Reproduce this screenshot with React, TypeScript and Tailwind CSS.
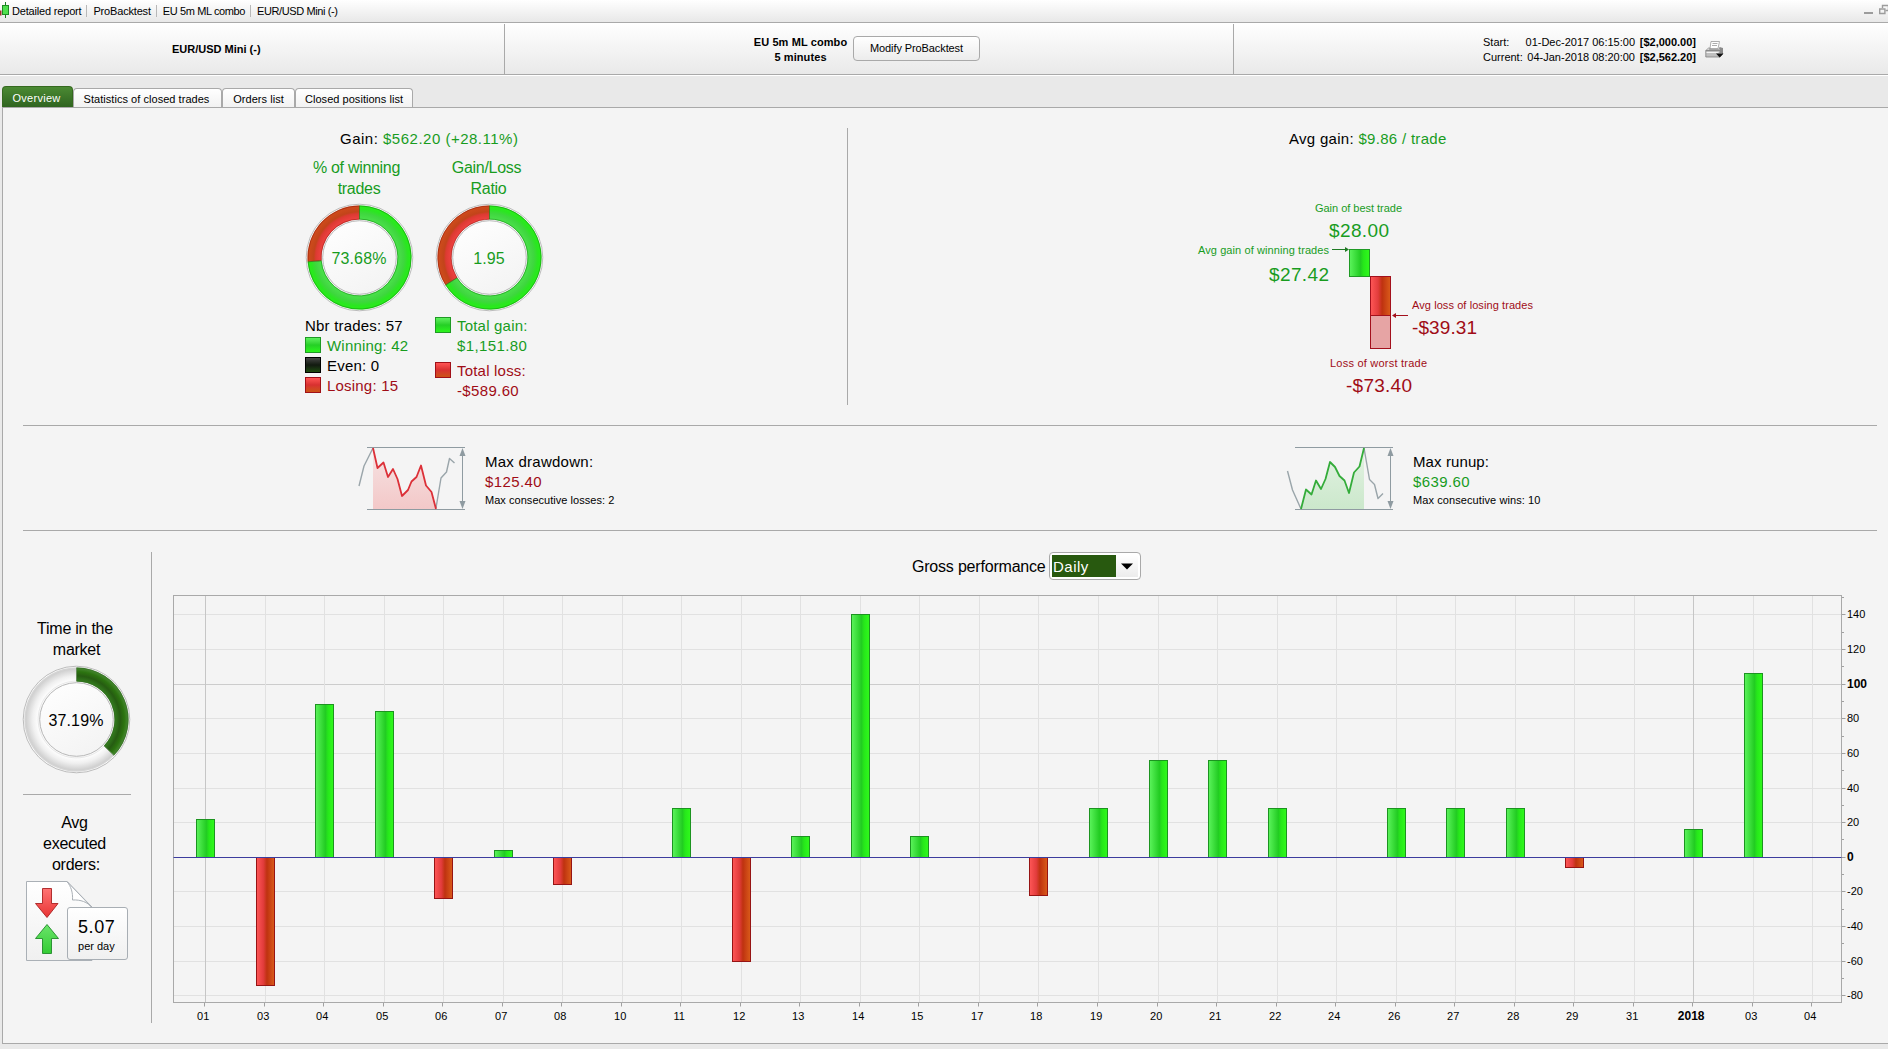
import type { ReactNode } from 'react'

const GREEN = '#189c1e'
const RED = '#a00c16'

interface DayBar {
  label: string
  value: number
  bold?: boolean
}

const days: DayBar[] = [
  { label: '01', value: 22 },
  { label: '03', value: -74 },
  { label: '04', value: 88 },
  { label: '05', value: 84 },
  { label: '06', value: -24 },
  { label: '07', value: 4 },
  { label: '08', value: -16 },
  { label: '10', value: 0 },
  { label: '11', value: 28 },
  { label: '12', value: -60 },
  { label: '13', value: 12 },
  { label: '14', value: 140 },
  { label: '15', value: 12 },
  { label: '17', value: 0 },
  { label: '18', value: -22 },
  { label: '19', value: 28 },
  { label: '20', value: 56 },
  { label: '21', value: 56 },
  { label: '22', value: 28 },
  { label: '24', value: 0 },
  { label: '26', value: 28 },
  { label: '27', value: 28 },
  { label: '28', value: 28 },
  { label: '29', value: -6 },
  { label: '31', value: 0 },
  { label: '2018', value: 16, bold: true },
  { label: '03', value: 106 },
  { label: '04', value: 0 },
]

// Gradients shared by every chart on the page
function Gradients() {
  return (
    <svg width="0" height="0" className="absolute">
      <defs>
        <linearGradient id="barGreen">
          <stop offset="0" stopColor="#5cf45c" />
          <stop offset="0.55" stopColor="#22cc22" />
          <stop offset="0.7" stopColor="#26e81a" />
          <stop offset="1" stopColor="#30fa1c" />
        </linearGradient>
        <linearGradient id="barRed">
          <stop offset="0" stopColor="#ff5757" />
          <stop offset="0.38" stopColor="#e23c3c" />
          <stop offset="0.58" stopColor="#bf3210" />
          <stop offset="1" stopColor="#da5c1a" />
        </linearGradient>
        <radialGradient id="ringGreen" gradientUnits="userSpaceOnUse" cx="54.5" cy="54.5" r="52">
          <stop offset="0.73" stopColor="#4be24b" />
          <stop offset="0.85" stopColor="#3fd63f" />
          <stop offset="0.93" stopColor="#2ae620" />
          <stop offset="1" stopColor="#26f016" />
        </radialGradient>
        <radialGradient id="ringRed" gradientUnits="userSpaceOnUse" cx="54.5" cy="54.5" r="52">
          <stop offset="0.73" stopColor="#f04242" />
          <stop offset="0.84" stopColor="#dc3a32" />
          <stop offset="0.88" stopColor="#c2441a" />
          <stop offset="1" stopColor="#d04c1c" />
        </radialGradient>
        <radialGradient id="ringDark" gradientUnits="userSpaceOnUse" cx="54.5" cy="54.5" r="52">
          <stop offset="0.73" stopColor="#357f20" />
          <stop offset="0.84" stopColor="#265c12" />
          <stop offset="0.92" stopColor="#2c7410" />
          <stop offset="1" stopColor="#4a8a36" />
        </radialGradient>
        <radialGradient id="ringGrey" gradientUnits="userSpaceOnUse" cx="54.5" cy="54.5" r="52">
          <stop offset="0.73" stopColor="#ffffff" />
          <stop offset="0.84" stopColor="#f0f0f0" />
          <stop offset="0.97" stopColor="#d0d0d0" />
          <stop offset="1" stopColor="#dadada" />
        </radialGradient>
        <linearGradient id="hole" x1="0" y1="0" x2="0.6" y2="1">
          <stop offset="0" stopColor="#ffffff" />
          <stop offset="1" stopColor="#f4f4f4" />
        </linearGradient>
        <linearGradient id="fillRed" x1="0" y1="0" x2="0" y2="1">
          <stop offset="0" stopColor="#f6e4e4" />
          <stop offset="1" stopColor="#f3c8c8" />
        </linearGradient>
        <linearGradient id="fillGreen" x1="0" y1="0" x2="0" y2="1">
          <stop offset="0" stopColor="#e4f2e4" />
          <stop offset="1" stopColor="#cbe8cb" />
        </linearGradient>
        <linearGradient id="page" x1="0" y1="0" x2="0" y2="1">
          <stop offset="0" stopColor="#ffffff" />
          <stop offset="1" stopColor="#f0f0f0" />
        </linearGradient>
        <linearGradient id="arrowRed" x1="0" y1="0" x2="0" y2="1">
          <stop offset="0" stopColor="#ff7474" />
          <stop offset="1" stopColor="#e83434" />
        </linearGradient>
        <linearGradient id="arrowGreen" x1="0" y1="0" x2="0" y2="1">
          <stop offset="0" stopColor="#6ae46a" />
          <stop offset="1" stopColor="#34cc34" />
        </linearGradient>
      </defs>
    </svg>
  )
}

function sector(from: number, to: number, outer: number, inner: number) {
  const c = 54.5
  const point = (t: number, r: number) => {
    const a = t * 2 * Math.PI
    return `${(c + r * Math.sin(a)).toFixed(2)} ${(c - r * Math.cos(a)).toFixed(2)}`
  }
  const large = to - from > 0.5 ? 1 : 0
  return `M${point(from, outer)} A${outer} ${outer} 0 ${large} 1 ${point(to, outer)} L${point(to, inner)} A${inner} ${inner} 0 ${large} 0 ${point(from, inner)} Z`
}

interface DonutProps {
  share: number
  text: string
  color: string
  fill: string
  rest: string
  edge: string
  restEdge: string
}

function Donut({ share, text, color, fill, rest, edge, restEdge }: DonutProps) {
  return (
    <svg width="109" height="109" className="block">
      <circle cx="54.5" cy="54.5" r="53.3" fill="#fafafa" stroke="#b4b4b4" strokeWidth="0.9" />
      <path d={sector(share, 1, 52, 38)} fill={rest} />
      <path d={sector(0, share, 52, 38)} fill={fill} />
      <path d={sector(share, 1, 51.6, 38.4)} fill="none" stroke={restEdge} strokeWidth="0.8" strokeOpacity="0.6" />
      <path d={sector(0, share, 51.6, 38.4)} fill="none" stroke={edge} strokeWidth="0.8" strokeOpacity="0.7" />
      <circle cx="54.5" cy="54.5" r="36.8" fill="url(#hole)" stroke="#b0b0b0" strokeWidth="0.9" />
      <text x="54" y="61" fontSize="16" textAnchor="middle" fill={color} letterSpacing="0.15">
        {text}
      </text>
    </svg>
  )
}

function Swatch({ tone }: { tone: 'green' | 'black' | 'red' }) {
  const tones = {
    green: 'border-[#1f9a24] from-[#5cf05c] via-[#25cf25] to-[#2cf41c]',
    black: 'border-black from-[#454545] via-[#121a10] to-[#1c4a0c]',
    red: 'border-[#a01018] from-[#ff5454] via-[#d83030] to-[#cc5214]',
  }
  return <span className={`mt-px size-4 shrink-0 border bg-linear-to-b ${tones[tone]}`} />
}

function LegendRow({ tone, className, children }: { tone: 'green' | 'black' | 'red'; className?: string; children: ReactNode }) {
  return (
    <div className={`flex gap-1.5 whitespace-nowrap ${className ?? ''}`}>
      <Swatch tone={tone} />
      <span>{children}</span>
    </div>
  )
}

function Crumb({ className, children }: { className: string; children: ReactNode }) {
  return (
    <span className={`flex items-center ${className}`}>
      <span className="mr-[6px] ml-[5px] h-3 w-px bg-[#b8b8b8]" />
      {children}
    </span>
  )
}

function TitleBar() {
  return (
    <div className="flex h-[23px] border-b border-[#a9a9a9] bg-linear-to-b from-white to-[#e8e8e8] text-[11px] leading-[22px]">
      <svg width="9" height="22" className="shrink-0">
        <path d="M0 10.5h1.5v5H0z" fill="#a03028" />
        <path d="M5.5 2v16" stroke="#1f7a24" />
        <rect x="2.5" y="5.5" width="6" height="9" fill="#4ee04e" stroke="#1f8a24" />
      </svg>
      <span className="ml-[3px] tracking-[-0.18px]">Detailed report</span>
      <Crumb className="tracking-[-0.18px]">ProBacktest</Crumb>
      <Crumb className="tracking-[-0.38px]">EU 5m ML combo</Crumb>
      <Crumb className="tracking-[-0.4px]">EUR/USD Mini (-)</Crumb>
      <svg width="24" height="22" className="ml-auto shrink-0" fill="none" stroke="#9c9c9c">
        <path d="M0 13h9" strokeWidth="2" />
        <path d="M18.5 8v-2.5h6v5h-3" strokeWidth="1.4" />
        <path d="M15.7 9h5.2v4.5h-5.2z" strokeWidth="1.4" />
      </svg>
    </div>
  )
}

function PrinterIcon() {
  return (
    <svg width="19" height="19">
      <path d="M6 1.5h8.5l-1.500 7h-8z" fill="#fff" stroke="#9c9c9c" strokeWidth="0.8" />
      <path d="M7.500 3.500h5M7 5.500h5" stroke="#999" strokeWidth="0.8" />
      <path d="M3.500 8h1.500l-.5 1.500h9l.8-1.500h1.200l2 2.500H.8z" fill="#d4d4d4" stroke="#8a8a8a" strokeWidth="0.7" />
      <path d="M.8 10.500h16.700v4l-3 2.500H.8z" fill="#c0c0c0" stroke="#808080" strokeWidth="0.8" />
      <path d="M1.500 12.500h12" stroke="#f4f4f4" />
      <path d="M14.500 7l3.500 1v5h-3.500z" fill="#8a8a8a" />
      <path d="M11 13.500h7.500l-3.800 4z" fill="#111" />
    </svg>
  )
}

function Header() {
  return (
    <div className="flex h-[52px] border-b border-[#a9a9a9] bg-linear-to-b from-white to-[#e9e9e9] text-[11px]">
      <div className="mt-px flex w-[505px] items-center border-r border-[#a9a9a9] pl-[172px] text-[11px] font-bold">
        EUR/USD Mini (-)
      </div>
      <div className="mt-px flex w-[729px] items-center border-r border-[#a9a9a9] pb-[2px] pl-[248px]">
        <div className="w-[95px] pt-[3px] text-center leading-[15px] font-bold tracking-[0.1px] whitespace-nowrap">
          EU 5m ML combo
          <br />5 minutes
        </div>
        <button className="ml-[5px] h-[25px] w-[127px] rounded border border-[#a9a9a9] bg-linear-to-b from-white to-[#ececec] pt-px text-[11px] tracking-[-0.1px]">
          Modify ProBacktest
        </button>
      </div>
      <div className="flex items-center pb-[1px] pl-[249px]">
        <div className="grid grid-cols-[38px_114px_61px] pt-[3px] leading-[15px] whitespace-nowrap">
          <span>Start:</span>
          <span className="text-right">01-Dec-2017 06:15:00</span>
          <b className="text-right">[$2,000.00]</b>
          <span>Current:</span>
          <span className="text-right">04-Jan-2018 08:20:00</span>
          <b className="text-right">[$2,562.20]</b>
        </div>
        <span className="ml-[9px] pt-[2px]">
          <PrinterIcon />
        </span>
      </div>
    </div>
  )
}

function Tabs() {
  const tab = 'h-[19px] rounded-t border border-b-0 border-[#a9a9a9] bg-linear-to-b from-white to-[#f2f2f2] text-center leading-[21px] tracking-[0.04px]'
  return (
    <div className="flex h-[32px] items-end border-t border-white bg-[#e9e9e9] pl-[2px] text-[11px] whitespace-nowrap">
      <div className="h-[21px] w-[71px] rounded-t border border-b-0 border-[#35691f] bg-linear-to-b from-[#4b8a33] to-[#2f6420] pr-[2px] text-center leading-[23px] tracking-[0.3px] text-white">
        Overview
      </div>
      <div className={`${tab} w-[149px] pr-[2px]`}>Statistics of closed trades</div>
      <div className={`${tab} w-[73px]`}>Orders list</div>
      <div className={`${tab} w-[118px]`}>Closed positions list</div>
    </div>
  )
}

function GainPanel() {
  return (
    <div className="w-[844px] pt-[21px] pl-[302px] text-[15px] leading-5 tracking-[0.2px]">
      <div className="pl-[35px] tracking-[0.5px]">
        Gain: <span className="text-[#189c1e]">$562.20 (+28.11%)</span>
      </div>
      <div className="mt-2 flex gap-[21px]">
        <div className="w-[109px]">
          <div className="mb-1 pr-1.5 text-center text-base leading-[21px] tracking-[-0.3px] text-[#189c1e]">
            % of winning
            <br />
            <span className="pl-[5px]">trades</span>
          </div>
          <Donut share={0.7368} text="73.68%" color={GREEN} fill="url(#ringGreen)" rest="url(#ringRed)" edge="#128a12" restEdge="#8a1208" />
          <div className="mt-[4px] whitespace-nowrap">Nbr trades: 57</div>
          <LegendRow tone="green" className="text-[#189c1e]">Winning: 42</LegendRow>
          <LegendRow tone="black">Even: 0</LegendRow>
          <LegendRow tone="red" className="text-[#a00c16]">Losing: 15</LegendRow>
        </div>
        <div className="w-[109px]">
          <div className="mb-1 pr-1.5 text-center text-base leading-[21px] tracking-[-0.3px] text-[#189c1e]">
            Gain/Loss
            <br />
            <span className="pl-[4px]">Ratio</span>
          </div>
          <Donut share={0.661} text="1.95" color={GREEN} fill="url(#ringGreen)" rest="url(#ringRed)" edge="#128a12" restEdge="#8a1208" />
          <LegendRow tone="green" className="mt-[4px] text-[#189c1e]">
            Total gain:
            <br />
            <span className="tracking-[0.4px]">$1,151.80</span>
          </LegendRow>
          <LegendRow tone="red" className="mt-[5px] text-[#a00c16]">
            Total loss:
            <br />
            <span className="tracking-[0.35px]">-$589.60</span>
          </LegendRow>
        </div>
      </div>
    </div>
  )
}

function TradePanel() {
  return (
    <div className="pt-[21px] pl-[342px]">
      <div className="pl-[99px] text-[15px] leading-5 tracking-[0.3px]">
        Avg gain: <span className="text-[#189c1e]">$9.86 / trade</span>
      </div>
      <svg width="360" height="260" className="mt-[31px] block">
        <g fill={GREEN}>
          <text x="125" y="32" fontSize="11" textLength="87">Gain of best trade</text>
          <text x="139" y="57" fontSize="19" textLength="60">$28.00</text>
          <text x="8" y="74" fontSize="11" textLength="131">Avg gain of winning trades</text>
          <text x="79" y="101" fontSize="19" textLength="60">$27.42</text>
        </g>
        <path d="M142 69.500h14" stroke="#1f7a24" />
        <path d="M155 67l4 2.500-4 2.500z" fill="#1f7a24" />
        <rect x="159.500" y="69.500" width="20" height="27" fill="url(#barGreen)" stroke="#1f9a24" />
        <rect x="180.500" y="135.500" width="20" height="33" fill="#e6a4a4" stroke="#a3101c" />
        <rect x="180.500" y="96.500" width="20" height="39" fill="url(#barRed)" stroke="#a3101c" />
        <path d="M204 135.500h14" stroke="#a3101c" />
        <path d="M206 133l-4 2.500 4 2.500z" fill="#a3101c" />
        <g fill={RED}>
          <text x="222" y="129" fontSize="11" textLength="121">Avg loss of losing trades</text>
          <text x="222" y="154" fontSize="19" textLength="65">-$39.31</text>
          <text x="140" y="187" fontSize="11" textLength="97">Loss of worst trade</text>
          <text x="156" y="212" fontSize="19" textLength="66">-$73.40</text>
        </g>
      </svg>
    </div>
  )
}

function RangeFrame({ x }: { x: number }) {
  return (
    <g>
      <path d={`M${x} 3.500h98M${x} 65.500h98M${x + 95.500} 6v57`} stroke="#8f9ba1" fill="none" />
      <path d={`M${x + 95.500} 4l3 8h-6zM${x + 95.500} 65l3-8h-6z`} fill="#8f9ba1" />
    </g>
  )
}

function DrawdownPanel() {
  return (
    <div className="flex w-[927px] items-start pt-[18px] pl-[354px]">
      <svg width="110" height="70" className="shrink-0" fill="none" strokeLinejoin="round">
        <path d="M16 4L20.500 24 26.500 18.500 31 33 36 25 40.500 35 45 52 51 46 54.500 37.500 59.500 33 64 21.500 69 41.500 74.500 48 79 65H16z" fill="url(#fillRed)" />
        <RangeFrame x={10} />
        <path d="M2 42l5-20 9-18M79 64l5-30 5.500-6 3-13.500 5 4.500" stroke="#9aa5aa" strokeWidth="1.400" />
        <path d="M16 4l4.500 20 6-5.500L31 33l5-8 4.500 10L45 52l6-6 3.500-8.500 5-4.500L64 21.500l5 20 5.500 6.500L79 65" stroke="#dc3038" strokeWidth="1.800" />
      </svg>
      <div className="pt-[8px] pl-[18px] text-[15px] leading-5 tracking-[0.25px]">
        <div>Max drawdown:</div>
        <div className="tracking-[0.4px] text-[#a00c16]">$125.40</div>
        <div className="pt-px text-[11px] leading-[14px] tracking-[0.04px]">Max consecutive losses: 2</div>
      </div>
    </div>
  )
}

function RunupPanel() {
  return (
    <div className="flex items-start pt-[18px] pl-[355px]">
      <svg width="110" height="70" className="shrink-0" fill="none" strokeLinejoin="round">
        <path d="M16 65L21 45.500 26.500 50.500 31 36.500 36 45 40.500 35 45 18 50 23 54.500 32 59.500 36.500 64 49 69 28.500 74.500 22.500 79 4V65z" fill="url(#fillGreen)" />
        <RangeFrame x={10} />
        <path d="M2.500 27l5 19L16 65M79 4l5.500 31.500 5 5 3.500 14 5-5" stroke="#9aa5aa" strokeWidth="1.400" />
        <path d="M16 65l5-19.500 5.500 5L31 36.500l5 8.500 4.500-10L45 18l5 5 4.500 9 5 4.500L64 49l5-20.500 5.500-6L79 4" stroke="#34ac3a" strokeWidth="1.800" />
      </svg>
      <div className="pt-[8px] pl-[18px] text-[15px] leading-5 tracking-[0.1px]">
        <div>Max runup:</div>
        <div className="tracking-[0.4px] text-[#189c1e]">$639.60</div>
        <div className="pt-px text-[11px] leading-[14px] tracking-[0.09px]">Max consecutive wins: 10</div>
      </div>
    </div>
  )
}

function OrdersIcon() {
  return (
    <svg width="103" height="81" className="block">
      <path d="M.5.500H41L66 26v53.500H.5z" fill="url(#page)" stroke="#aab0b6" />
      <path d="M41 .500c4 5 6 11 5.500 18.500 8-.5 15 2 19.500 7.500z" fill="#fff" stroke="#aab0b6" />
      <path d="M16.500 7.500h9v15h6.500L21 36.500 9.500 22.500h7z" fill="url(#arrowRed)" stroke="#a82020" strokeWidth="0.900" />
      <path d="M21 43.500l11.500 14h-7v15h-9v-15h-7z" fill="url(#arrowGreen)" stroke="#208a28" strokeWidth="0.900" />
      <rect x="41.500" y="26.500" width="60" height="52" rx="2.500" fill="url(#page)" stroke="#a8aeb4" />
      <text x="52" y="52" fontSize="18" textLength="36.500">5.07</text>
      <text x="52" y="69" fontSize="11" textLength="36.500">per day</text>
    </svg>
  )
}

function SidePanel() {
  return (
    <div className="w-[148px] pl-5 text-base leading-[21px] tracking-[-0.25px]">
      <div className="w-[104px] pt-[87px] text-center">
        Time in the
        <br />
        <span className="pl-[3px]">market</span>
      </div>
      <div className="mt-[5px] -ml-px tracking-normal">
        <Donut share={0.3719} text="37.19%" color="#000" fill="url(#ringDark)" rest="url(#ringGrey)" edge="#2f6420" restEdge="#d0d0d0" />
      </div>
      <div className="mt-5 h-px w-[108px] bg-[#a9a9a9]" />
      <div className="w-[103px] pt-[17px] text-center">
        Avg
        <br />
        executed
        <br />
        <span className="pl-[3px]">orders:</span>
      </div>
      <div className="mt-[6px] ml-[3px]">
        <OrdersIcon />
      </div>
    </div>
  )
}

const PLOT = { left: 21.5, top: 10.5, right: 1689.5, bottom: 417.5, zero: 272.5 }
const UNIT = 1.731
const STEP = 59.52

function PerformanceChart() {
  const yOf = (v: number) => Math.round(PLOT.zero - 0.7 - v * UNIT) + 0.5
  const xOf = (i: number) => Math.round(53.2 + i * STEP) + 0.5
  const ticks = Array.from({ length: 24 }, (_, i) => 150 - i * 10)

  return (
    <svg width="1736" height="455" className="block">
      {ticks.map((v) => (
        <g key={v}>
          {v % 20 === 0 && (
            <path d={`M${PLOT.left} ${yOf(v)}H${PLOT.right}`} stroke={v === 100 ? '#cccccc' : '#e1e1e1'} />
          )}
          <path d={`M${PLOT.right} ${yOf(v)}h${v % 20 === 0 ? 4 : 2.5}`} stroke="#a0a0a0" />
          {v % 20 === 0 && (
            <text
              x={PLOT.right + 5.5}
              y={yOf(v) + 3.5}
              fontSize={v % 100 === 0 ? 12 : 11}
              fontWeight={v % 100 === 0 ? 700 : 400}
            >
              {v}
            </text>
          )}
        </g>
      ))}
      {days.map((day, i) => (
        <g key={i}>
          <path d={`M${xOf(i)} ${PLOT.top}V${PLOT.bottom}`} stroke={i === 0 || day.bold ? '#c6c6c6' : '#e1e1e1'} />
          <path d={`M${xOf(i) - 1} ${PLOT.bottom}v4`} stroke="#a0a0a0" />
          <text
            x={xOf(i) - 2.3}
            y="435"
            textAnchor="middle"
            fontSize={day.bold ? 12 : 11}
            fontWeight={day.bold ? 700 : 400}
          >
            {day.label}
          </text>
        </g>
      ))}
      <rect
        x={PLOT.left}
        y={PLOT.top}
        width={PLOT.right - PLOT.left}
        height={PLOT.bottom - PLOT.top}
        fill="none"
        stroke="#a9a9a9"
      />
      {days.map((day, i) => {
        if (day.value === 0) return null
        const y = yOf(day.value)
        return (
          <rect
            key={i}
            x={xOf(i) - 9}
            y={Math.min(y, PLOT.zero)}
            width="18"
            height={Math.abs(y - PLOT.zero)}
            fill={day.value > 0 ? 'url(#barGreen)' : 'url(#barRed)'}
            stroke={day.value > 0 ? '#1c9420' : '#961414'}
          />
        )
      })}
      <path d={`M${PLOT.left} ${PLOT.zero}H${PLOT.right}`} stroke="#3c3c9e" />
    </svg>
  )
}

function PeriodSelect() {
  return (
    <div className="flex h-7 w-[92px] rounded border border-[#a9a9a9] bg-white p-[2px] text-[15px]">
      <div className="w-16 bg-[#28590f] pl-[1px] leading-[23px] tracking-[0.5px] text-white">Daily</div>
      <div className="flex flex-1 items-center justify-center bg-linear-to-b from-white to-[#ececec]">
        <svg width="12" height="7">
          <path d="M0 .500h12l-6 6z" />
        </svg>
      </div>
    </div>
  )
}

export default function App() {
  return (
    <div className="flex h-[1049px] w-[1888px] flex-col overflow-hidden bg-[#e9e9e9] font-['Liberation_Sans',Arial,sans-serif] text-black">
      <Gradients />
      <TitleBar />
      <Header />
      <Tabs />
      <div className="ml-[2px] h-[937px] border-t border-b border-l border-[#a9a9a9] bg-[#f4f4f4]">
        <div className="flex h-[317px]">
          <GainPanel />
          <div className="my-5 w-px bg-[#a9a9a9]" />
          <TradePanel />
        </div>
        <div className="mr-[11px] ml-5 h-px bg-[#a9a9a9]" />
        <div className="flex h-[104px]">
          <DrawdownPanel />
          <RunupPanel />
        </div>
        <div className="mr-[11px] ml-5 h-px bg-[#a9a9a9]" />
        <div className="flex h-[512px]">
          <SidePanel />
          <div className="mt-[21px] mb-5 w-px bg-[#a9a9a9]" />
          <div>
            <div className="flex h-[54px] items-start pt-[21px] pl-[760px]">
              <span className="w-[137px] pt-px text-base leading-7 tracking-[-0.2px] whitespace-nowrap">Gross performance</span>
              <PeriodSelect />
            </div>
            <PerformanceChart />
          </div>
        </div>
      </div>
    </div>
  )
}
